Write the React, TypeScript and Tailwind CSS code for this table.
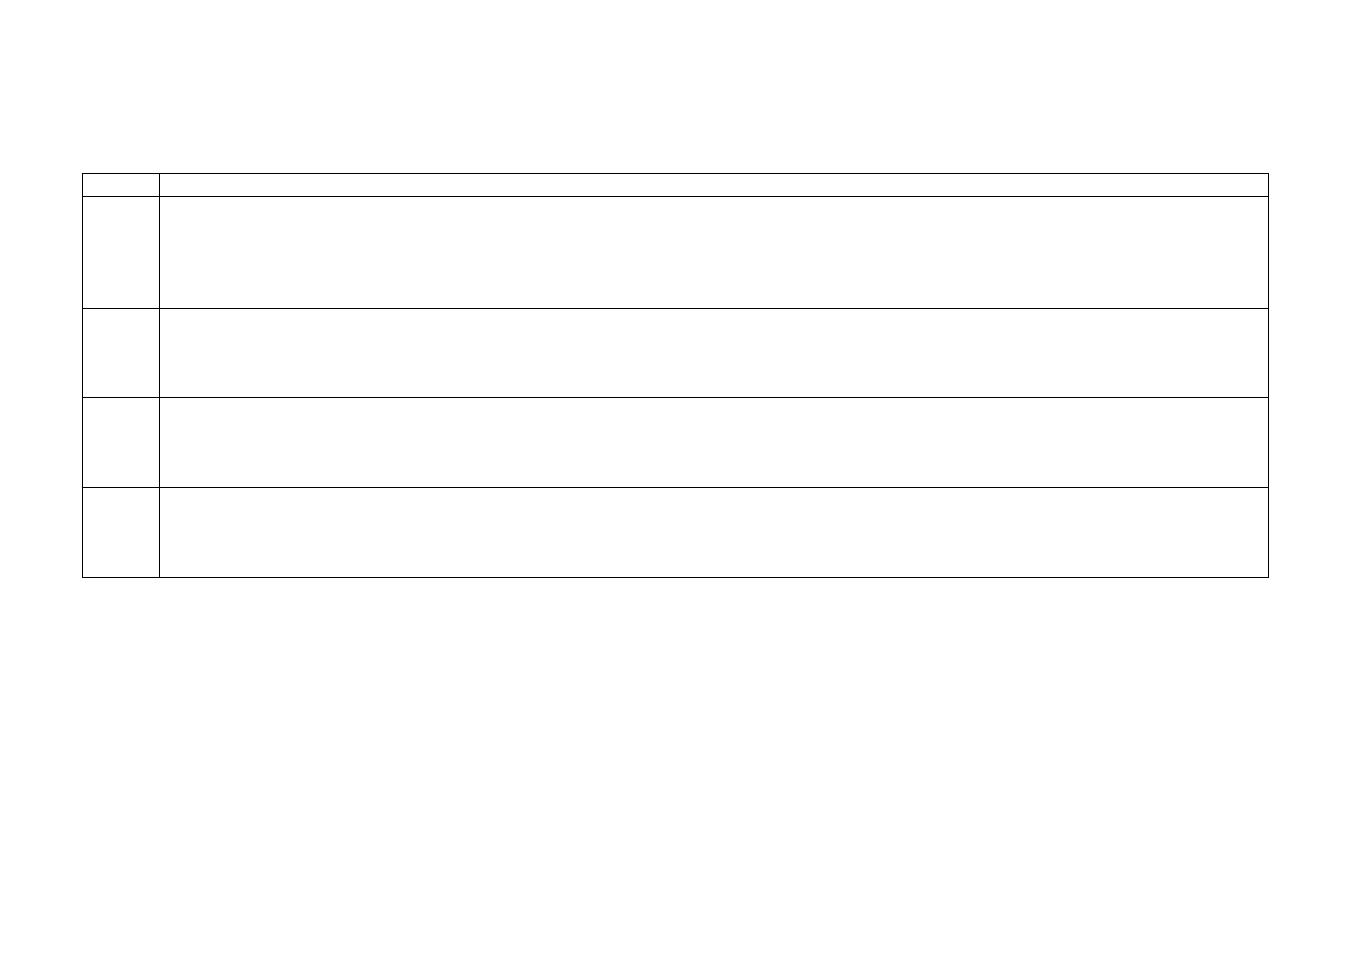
export default function App() {
  const rows = [
    { h: "h-[22px]", top: false },
    { h: "h-[112px]", top: true },
    { h: "h-[89px]", top: true },
    { h: "h-[90px]", top: true },
    { h: "h-[90px]", top: true },
  ];
  return (
    <div className="min-h-[960px] w-full bg-white pt-[173px] pl-[82px]" style={{ fontFamily: '"Liberation Sans", Arial, sans-serif' }}>
      <div className="flex w-[1187px] flex-col border border-black">
        {rows.map((r, i) => (
          <div key={i} className={`flex ${r.h} ${r.top ? "border-t border-black" : ""}`}>
            <div className="w-[77px] shrink-0 border-r border-black" />
            <div className="flex-1" />
          </div>
        ))}
      </div>
    </div>
  );
}
